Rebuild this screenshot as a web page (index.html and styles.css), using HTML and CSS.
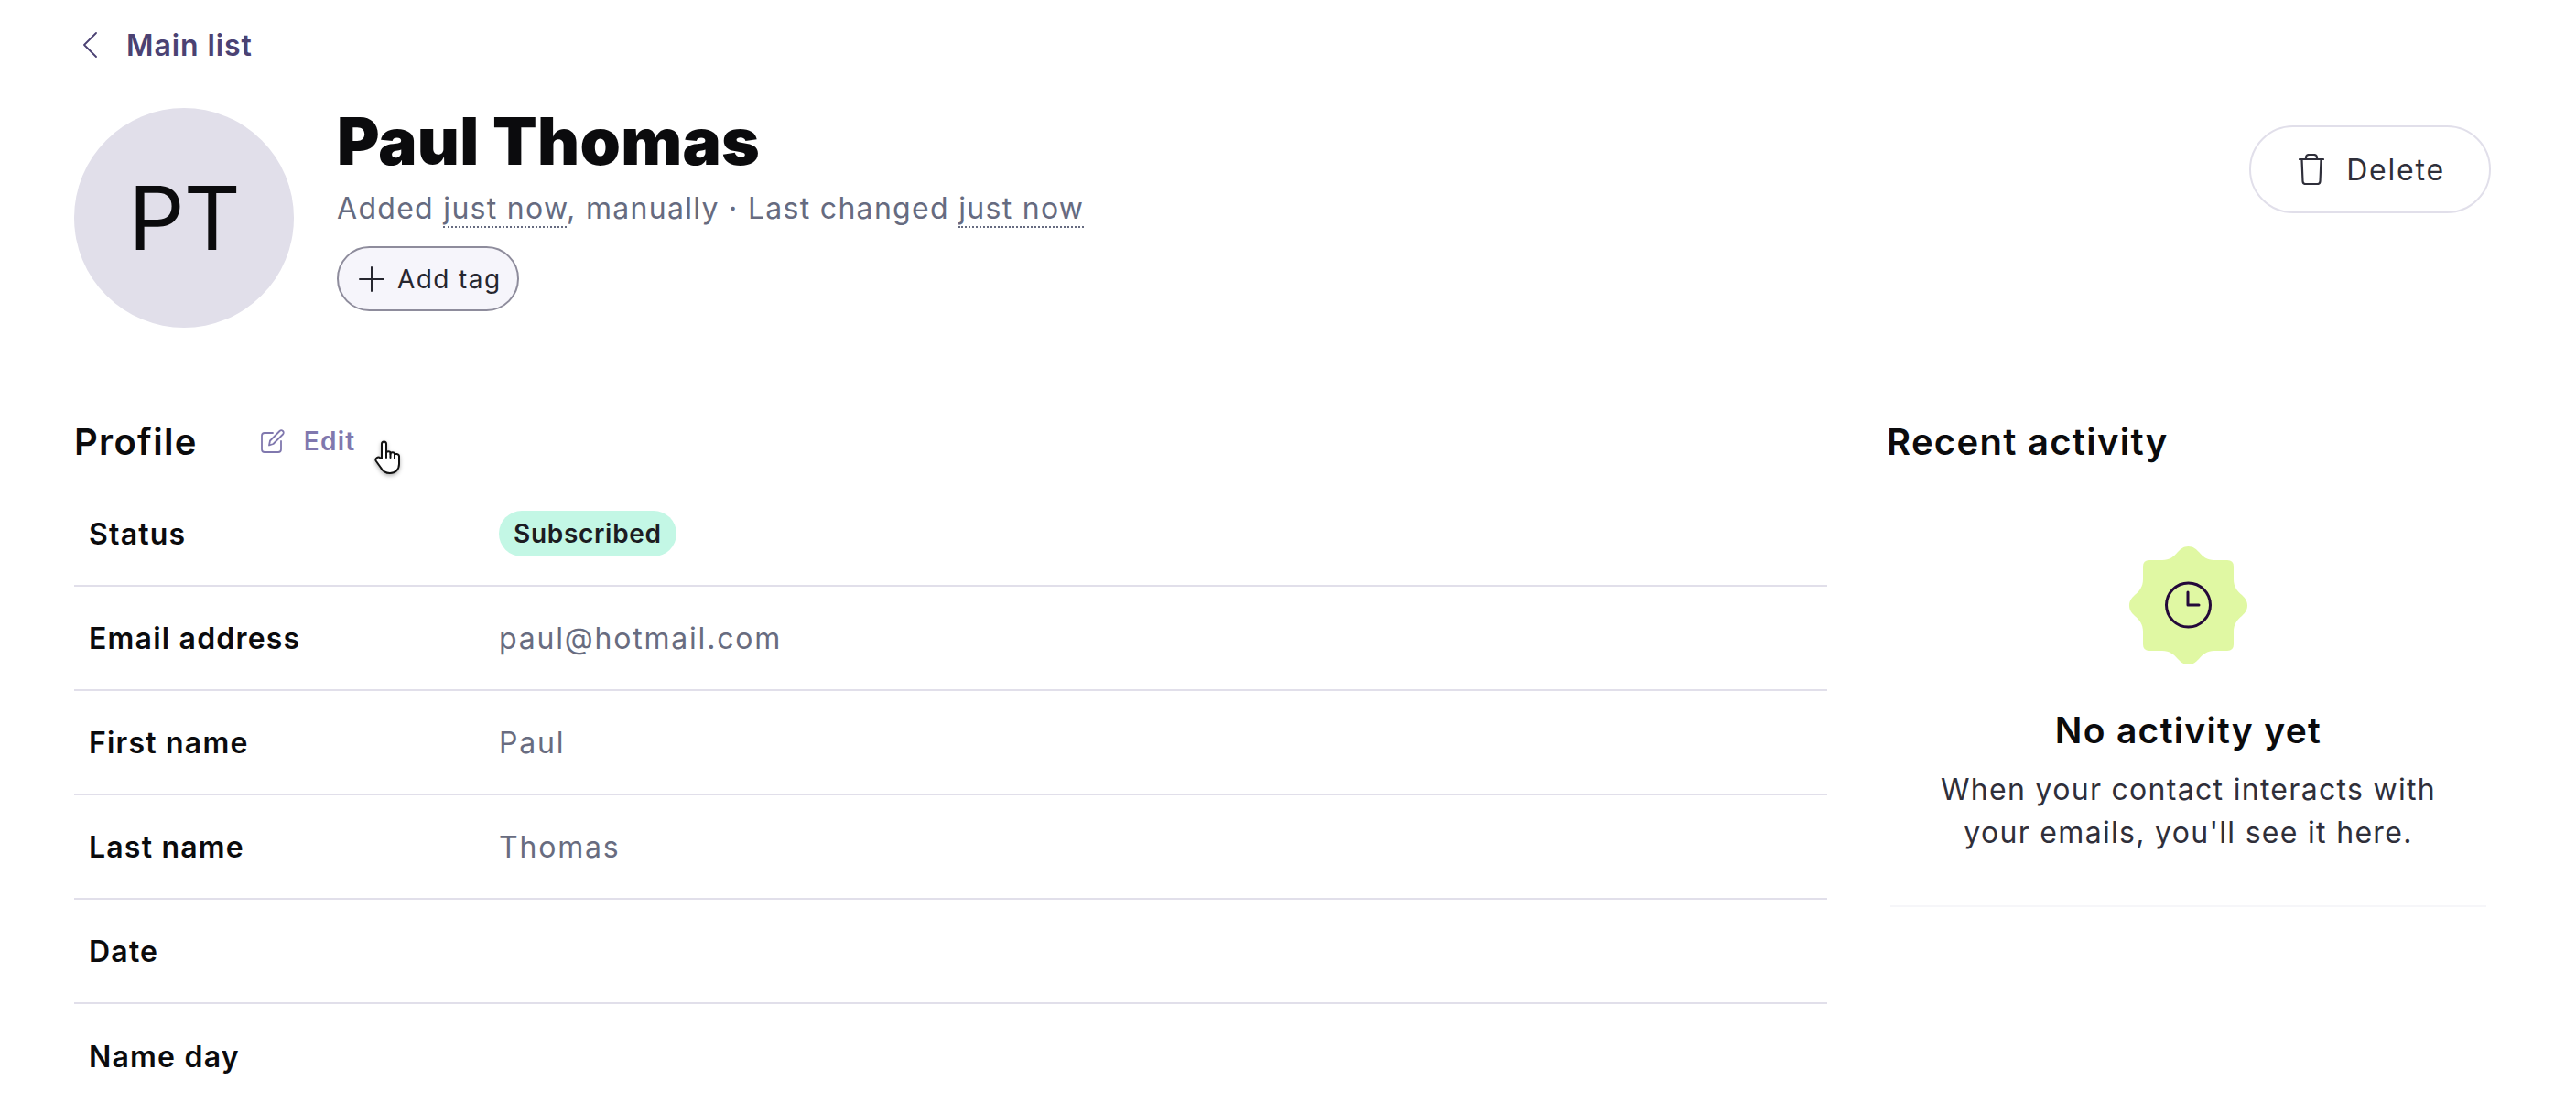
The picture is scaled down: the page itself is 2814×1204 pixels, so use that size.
FILE: index.html
```html
<!DOCTYPE html>
<html lang="en">

<head>
  <meta charset="UTF-8" />
  <meta name="viewport" content="width=device-width, initial-scale=1" />
  <title>Paul Thomas</title>
  <link rel="stylesheet" href="styles.css">
</head>

<body>
  <main class="page">
    <a class="back-link" href="#">
      <svg class="back-icon" viewBox="0 0 16 28" fill="none" stroke="currentColor" stroke-width="1.8" stroke-linecap="round" stroke-linejoin="round">
        <path d="M15 1 2 14l13 13" />
      </svg>
      Main list
    </a>

    <header class="contact-header">
      <div class="avatar">PT</div>
      <div class="contact-summary">
        <h1>Paul Thomas</h1>
        <p class="contact-meta">Added <span class="time-hint">just now</span>, manually · Last changed <span class="time-hint">just now</span></p>
        <button class="tag-button">
          <svg class="plus-icon" viewBox="0 0 28 28" fill="none" stroke="currentColor" stroke-width="2" stroke-linecap="round">
            <path d="M14 1v26M1 14h26" />
          </svg>
          Add tag
        </button>
      </div>
      <button class="delete-button">
        <svg class="trash-icon" viewBox="0 0 28 34" fill="none" stroke="currentColor" stroke-width="2.2" stroke-linecap="round" stroke-linejoin="round">
          <path d="M1 6h26" />
          <path d="M8 6V4.500C8 2.500 9.500 1 11.500 1h5C18.500 1 20 2.500 20 4.500V6" />
          <path d="M3.500 6l1 24c.1 1.800 1.200 3 3 3h13c1.800 0 2.900-1.200 3-3l1-24" />
        </svg>
        Delete
      </button>
    </header>

    <div class="columns">
      <section class="profile">
        <div class="section-head">
          <h2>Profile</h2>
          <a class="edit-link" href="#">
            <svg class="edit-icon" viewBox="0 0 26 26" fill="none" stroke="currentColor" stroke-width="1.8" stroke-linecap="round" stroke-linejoin="round">
              <path d="M13 4H4C2.300 4 1 5.300 1 7v15c0 1.700 1.300 3 3 3h15c1.700 0 3-1.300 3-3v-9" />
              <path d="M9 17.500l1-5L20.500 2c1-1 2.500-1 3.500 0s1 2.500 0 3.500L13.500 16z" />
            </svg>
            Edit
          </a>
          <svg class="hand-cursor" viewBox="0 0 30 37" stroke="#111" stroke-width="2" stroke-linecap="round" stroke-linejoin="round">
            <path fill="#fff" d="M9 20V4c0-3.500 5-3.500 5 0v10c0-2.500 4.500-2.500 4.500 0v1c0-2.500 4.500-2.500 4.500 0v1.500c0-2.500 5-2 5 1V26c0 6-4 10-10 10-5 0-8-2-10-6l-5-7c-2-3 2-6 4.500-3.500z" />
            <path fill="none" d="M14 14v5M18.500 15v4M23 16.500V20" />
          </svg>
        </div>

        <dl class="fields">
          <div class="field">
            <dt>Status</dt>
            <dd><span class="status-pill">Subscribed</span></dd>
          </div>
          <div class="field">
            <dt>Email address</dt>
            <dd>paul@hotmail.com</dd>
          </div>
          <div class="field">
            <dt>First name</dt>
            <dd>Paul</dd>
          </div>
          <div class="field">
            <dt>Last name</dt>
            <dd>Thomas</dd>
          </div>
          <div class="field">
            <dt>Date</dt>
            <dd></dd>
          </div>
          <div class="field">
            <dt>Name day</dt>
            <dd></dd>
          </div>
        </dl>
      </section>

      <aside class="activity">
        <div class="section-head">
          <h2>Recent activity</h2>
        </div>
        <div class="empty-state">
          <svg class="empty-badge" viewBox="0 0 129 129">
            <path fill="#e0f8a3" d="M64.500 0C70 0 73 3 76 6C80 11 85 15 93 15L107 15Q114 15 114 22L114 36C114 44 118 49 123 53C126 56 129 59 129 64.500C129 70 126 73 123 76C118 80 114 85 114 93L114 107Q114 114 107 114L93 114C85 114 80 118 76 123C73 126 70 129 64.500 129C59 129 56 126 53 123C49 118 44 114 36 114L22 114Q15 114 15 107L15 93C15 85 11 80 6 76C3 73 0 70 0 64.500C0 59 3 56 6 53C11 49 15 44 15 36L15 22Q15 15 22 15L36 15C44 15 49 11 53 6C56 3 59 0 64.500 0Z" />
            <circle cx="64.500" cy="64" r="24" fill="none" stroke="#24093a" stroke-width="3" />
            <path d="M64 50v14h12" fill="none" stroke="#24093a" stroke-width="3" stroke-linecap="round" stroke-linejoin="round" />
          </svg>
          <h3>No activity yet</h3>
          <p>When your contact interacts with<br>your emails, you'll see it here.</p>
        </div>
      </aside>
    </div>
  </main>
</body>

</html>
```

FILE: styles.css
```css
* {
  box-sizing: border-box;
}

html,
body {
  height: 100%;
}

body {
  margin: 0;
  overflow: hidden;
  font-family: Inter, "Liberation Sans", sans-serif;
  background-color: #fff;
  color: #0b0b0d;
}

a {
  text-decoration: none;
  color: inherit;
}

button {
  font-family: inherit;
  cursor: pointer;
}

.page {
  padding: 30px 93px 0 81px;
}

.back-link {
  display: flex;
  align-items: center;
  height: 38px;
  padding-left: 8px;
  gap: 31px;
  font-size: 32px;
  font-weight: 600;
  letter-spacing: 0.9px;
  color: #4b4273;
}

.back-icon {
  width: 18px;
  height: 28px;
}

.contact-header {
  display: flex;
  align-items: flex-start;
  margin-top: 50px;
}

.avatar {
  flex: none;
  display: flex;
  align-items: center;
  justify-content: center;
  width: 240px;
  height: 240px;
  border-radius: 50%;
  background-color: #e1dfea;
  font-size: 96px;
  letter-spacing: -1px;
  color: #0b0b0d;
}

.contact-summary {
  flex: 1;
  margin-left: 47px;
}

.contact-summary h1 {
  margin: 0;
  font-size: 71px;
  font-weight: 900;
  line-height: 72px;
  letter-spacing: 0.3px;
}

.contact-meta {
  margin: 18px 0 0;
  font-size: 32px;
  line-height: 40px;
  letter-spacing: 1.3px;
  color: #666b80;
}

.time-hint {
  border-bottom: 2px dotted #666b80;
}

.tag-button {
  display: flex;
  align-items: center;
  gap: 14px;
  height: 71px;
  margin-top: 21px;
  padding: 0 18px 0 22px;
  border: 2px solid #8e8c9c;
  border-radius: 36px;
  background-color: #f6f5fb;
  font-size: 28px;
  letter-spacing: 1.4px;
  color: #26262f;
}

.plus-icon {
  width: 28px;
  height: 28px;
}

.delete-button {
  flex: none;
  display: flex;
  align-items: center;
  gap: 24px;
  height: 96px;
  margin-top: 19px;
  padding: 0 48px 0 52px;
  border: 2px solid #e1dfea;
  border-radius: 48px;
  background-color: #fff;
  font-size: 32px;
  letter-spacing: 1.8px;
  color: #2f2f3a;
}

.trash-icon {
  width: 28px;
  height: 34px;
}

.columns {
  display: grid;
  grid-template-columns: 1915px 659px;
  gap: 65px;
  margin-top: 99px;
}

.section-head {
  position: relative;
  display: flex;
  align-items: center;
  height: 50px;
}

.section-head h2 {
  margin: 0;
  font-size: 40px;
  font-weight: 600;
  letter-spacing: 1.3px;
}

.edit-link {
  display: flex;
  align-items: center;
  gap: 21px;
  margin-left: 69px;
  font-size: 28px;
  font-weight: 600;
  letter-spacing: 1.3px;
  color: #8078ae;
}

.edit-icon {
  width: 26px;
  height: 26px;
}

.hand-cursor {
  position: absolute;
  left: 327px;
  top: 24px;
  width: 30px;
  height: 37px;
  filter: drop-shadow(0 2px 2px rgba(0, 0, 0, 0.3));
}

.fields {
  margin: 20px 0 0;
}

.field {
  display: flex;
  align-items: center;
  height: 114px;
  padding-left: 16px;
  border-bottom: 2px solid #e1dfea;
  font-size: 32px;
}

.field:last-child {
  border-bottom: none;
}

.field dt {
  width: 448px;
  font-weight: 600;
  letter-spacing: 1.2px;
}

.field dd {
  margin: 0;
  letter-spacing: 1.8px;
  color: #686c80;
}

.status-pill {
  display: block;
  padding: 7px 16px;
  border-radius: 25px;
  background-color: #c3f7e5;
  font-size: 28px;
  font-weight: 600;
  line-height: 36px;
  letter-spacing: 0.7px;
  color: #1c1c22;
}

.empty-state {
  display: flex;
  flex-direction: column;
  align-items: center;
  height: 434px;
  margin: 50px 4px 0;
  padding-top: 40px;
  border-bottom: 2px solid #f6f6f9;
  text-align: center;
}

.empty-badge {
  flex: none;
  width: 129px;
  height: 129px;
}

.empty-state h3 {
  margin: 48px 0 0;
  font-size: 39px;
  font-weight: 600;
  line-height: 48px;
  letter-spacing: 1.3px;
}

.empty-state p {
  margin: 17px 0 0;
  font-size: 32px;
  line-height: 47px;
  letter-spacing: 1.3px;
  color: #2f2f3a;
}
```
